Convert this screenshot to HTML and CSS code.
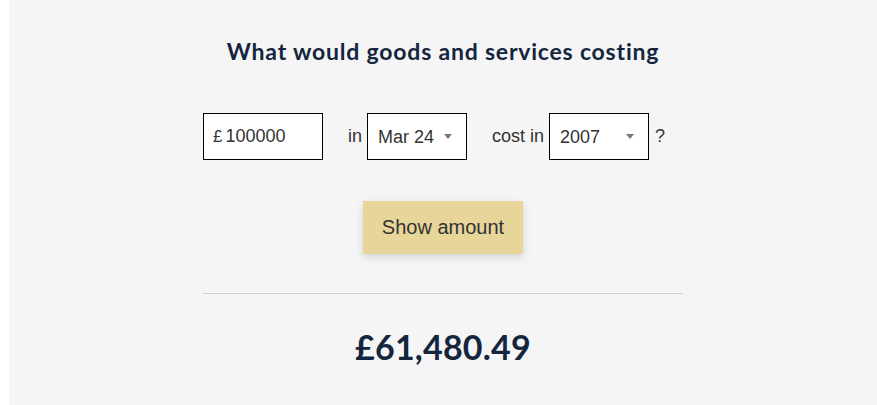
FILE: index.html
```html
<!DOCTYPE html>
<html lang="en">
<head>
    <meta charset="UTF-8">
    <title>Inflation calculator</title>
    <link rel="stylesheet" href="styles.css">
</head>
<body>
    <div class="calc_panel">
        <h2 class="calc_heading">What would goods and services costing</h2>

        <div class="calc_body">
            <div class="calc_row">
                <div class="amountBox">
                    <span class="pound">£</span>
                    <input type="text" class="amountInput" value="100000">
                </div>
                <span class="rowLabel">in</span>
                <div class="selectBox">
                    <select class="selectEl">
                        <option>Mar 24</option>
                    </select>
                    <span class="selectArrow"></span>
                </div>
                <span class="rowLabel">cost in</span>
                <div class="selectBox">
                    <select class="selectEl">
                        <option>2007</option>
                    </select>
                    <span class="selectArrow"></span>
                </div>
                <span class="qMark">?</span>
            </div>

            <div class="btn_wrap">
                <button class="show_btn">Show amount</button>
            </div>

            <hr class="divider">

            <p class="result">£61,480.49</p>
        </div>
    </div>
</body>
</html>
```

FILE: styles.css
```css
body{
    margin: 0;
    padding: 0;
    background-color: #fff;
    font-family: "Liberation Sans", Arial, sans-serif;
}

.calc_panel{
    margin-left: 9px;
    background-color: #f5f5f5;
    height: 405px;
    padding-top: 37px;
    box-sizing: border-box;
}

.calc_heading{
    margin: 0;
    text-align: center;
    font-family: "Lato", sans-serif;
    font-weight: 700;
    font-size: 23px;
    letter-spacing: 0.8px;
    color: #14253e;
}

.calc_body{
    width: 480px;
    margin: 0 auto;
    padding-top: 48px;
}

.calc_row{
    display: flex;
    align-items: center;
    font-size: 18px;
    color: #333;
}

.amountBox{
    display: flex;
    align-items: center;
    width: 120px;
    height: 47px;
    border: 1px solid #000;
    background-color: #fff;
    box-sizing: border-box;
    padding-left: 9px;
}

.pound{
    font-size: 17px;
    margin-right: 3px;
}

.amountInput{
    border: 0;
    outline: none;
    width: 80px;
    padding: 0;
    font-size: 18px;
    font-family: "Liberation Sans", Arial, sans-serif;
    color: #333;
    background: transparent;
}

.rowLabel{
    margin-left: 25px;
    margin-right: 5px;
}

.selectBox{
    position: relative;
    width: 100px;
    height: 47px;
}

.selectEl{
    appearance: none;
    -webkit-appearance: none;
    width: 100%;
    height: 100%;
    border: 1px solid #000;
    border-radius: 0;
    background-color: #fff;
    padding: 0 0 0 10px;
    font-size: 18px;
    font-family: "Liberation Sans", Arial, sans-serif;
    color: #333;
    outline: none;
}

.selectArrow{
    position: absolute;
    right: 15px;
    top: 21px;
    width: 0;
    height: 0;
    border-left: 4px solid transparent;
    border-right: 4px solid transparent;
    border-top: 5px solid #777;
    pointer-events: none;
}

.qMark{
    margin-left: 6px;
}

.btn_wrap{
    display: flex;
    justify-content: center;
    padding-top: 41px;
}

.show_btn{
    width: 160px;
    height: 53px;
    border: 0;
    background-color: #e8d59a;
    color: #333;
    font-size: 20px;
    font-family: "Liberation Sans", Arial, sans-serif;
    box-shadow: 0 3px 8px rgba(0, 0, 0, 0.15);
}

.divider{
    border: 0;
    border-top: 1px solid #d0d0d0;
    margin: 39px 0 0 0;
}

.result{
    margin: 0;
    padding-top: 32px;
    text-align: center;
    font-family: "Lato", sans-serif;
    font-weight: 700;
    font-size: 34px;
    letter-spacing: 0.2px;
    color: #14253e;
}
```
